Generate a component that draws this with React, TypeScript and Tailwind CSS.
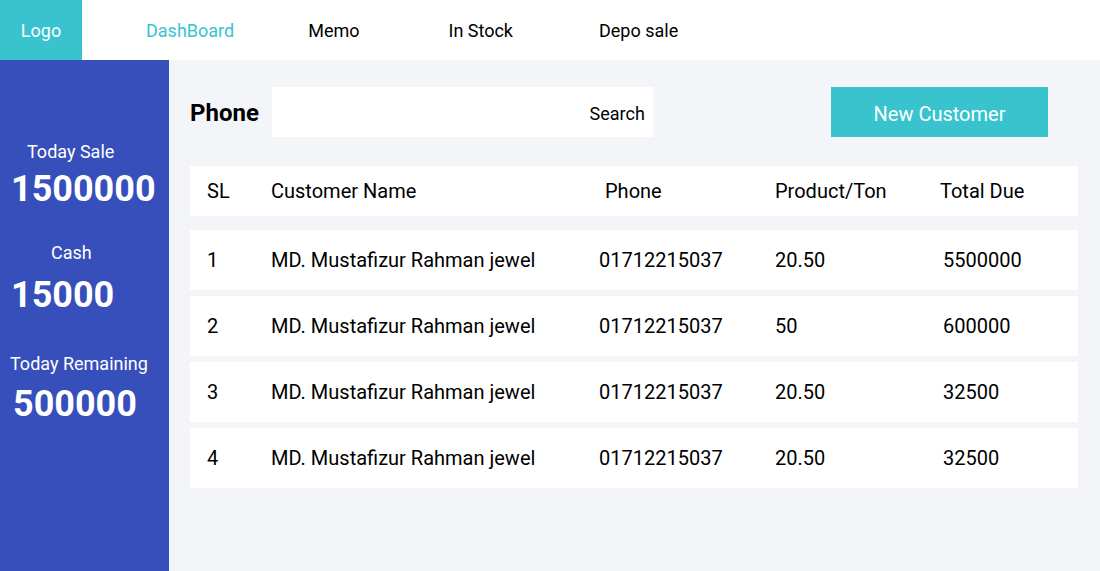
const rows = [
  { sl: "1", name: "MD. Mustafizur Rahman jewel", phone: "01712215037", product: "20.50", due: "5500000" },
  { sl: "2", name: "MD. Mustafizur Rahman jewel", phone: "01712215037", product: "50", due: "600000" },
  { sl: "3", name: "MD. Mustafizur Rahman jewel", phone: "01712215037", product: "20.50", due: "32500" },
  { sl: "4", name: "MD. Mustafizur Rahman jewel", phone: "01712215037", product: "20.50", due: "32500" },
]

export default function App() {
  return (
    <div className="w-[1100px] h-[571px] flex flex-col bg-[#f4f5f9] text-black overflow-hidden font-['Roboto',sans-serif]">
      {/* Top navbar */}
      <header className="h-[60px] shrink-0 bg-white flex items-center">
        <div className="w-[82px] h-full bg-[#38c3cf] text-white text-[18px] flex items-center justify-center">
          Logo
        </div>
        <nav className="flex items-center text-[18px]">
          <a className="ml-[64px] text-[#38c3cf]">DashBoard</a>
          <a className="ml-[74px]">Memo</a>
          <a className="ml-[89px]">In Stock</a>
          <a className="ml-[86px]">Depo sale</a>
        </nav>
      </header>

      <div className="flex flex-1 min-h-0">
        {/* Sidebar */}
        <aside className="w-[169px] shrink-0 bg-[#364fba] text-white flex flex-col pt-[81px]">
          <p className="text-[18px] leading-[22px] pl-[27px]">Today Sale</p>
          <p className="mt-[5px] pl-[11px] text-[36px] leading-[42px] font-bold">1500000</p>

          <p className="mt-[32px] text-[18px] leading-[22px] pl-[51px]">Cash</p>
          <p className="mt-[10px] pl-[11px] text-[36px] leading-[42px] font-bold">15000</p>

          <p className="mt-[37px] text-[18px] leading-[22px] pl-[10px]">Today Remaining</p>
          <p className="mt-[8px] pl-[13px] text-[36px] leading-[42px] font-bold">500000</p>
        </aside>

        {/* Main content */}
        <main className="flex-1 pl-[21px] pr-[22px] pt-[27px]">
          <div className="flex items-center">
            <label className="text-[24px] font-bold pt-[2px]">Phone</label>
            <div className="ml-[13px] w-[381px] h-[50px] bg-white flex items-center justify-end pr-[8px] pt-[2px] text-[18px]">
              Search
            </div>
            <button className="ml-auto mr-[30px] w-[217px] h-[50px] bg-[#38c3cf] text-white text-[20px] pt-[3px]">
              New Customer
            </button>
          </div>

          <div className="mt-[29px] h-[50px] bg-white grid grid-cols-[81px_328px_176px_165px_1fr] items-center text-[20px]">
            <span className="pl-[17px]">SL</span>
            <span>Customer Name</span>
            <span className="pl-[6px]">Phone</span>
            <span>Product/Ton</span>
            <span>Total Due</span>
          </div>

          <div className="mt-[14px] flex flex-col gap-[6px]">
            {rows.map((r) => (
              <div
                key={r.sl}
                className="h-[60px] bg-white grid grid-cols-[81px_328px_176px_165px_1fr] items-center text-[20px]"
              >
                <span className="pl-[17px]">{r.sl}</span>
                <span>{r.name}</span>
                <span>{r.phone}</span>
                <span>{r.product}</span>
                <span className="pl-[3px]">{r.due}</span>
              </div>
            ))}
          </div>
        </main>
      </div>
    </div>
  )
}
